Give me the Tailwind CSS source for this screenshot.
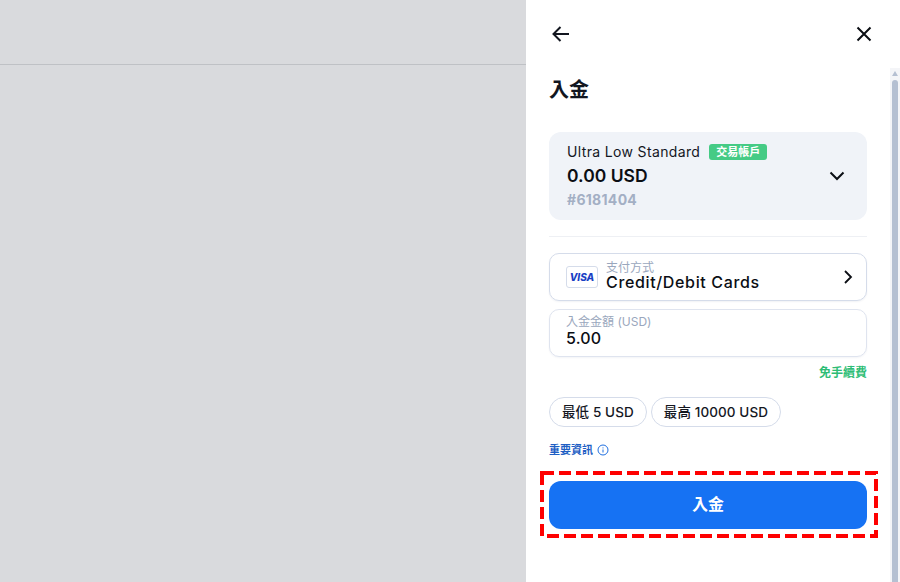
<!DOCTYPE html>
<html lang="zh-Hant">
<head>
<meta charset="UTF-8" />
<meta name="viewport" content="width=device-width, initial-scale=1.0"/>
<title>入金</title>
<script src="https://cdn.jsdelivr.net/npm/@tailwindcss/browser@4"></script>
</head>
<body class="h-[582px] w-[900px] overflow-hidden bg-[#d9dadd] font-['Inter','Noto_Sans_CJK_TC',sans-serif] text-[#0b0e14]">
<div class="flex h-full">
  <!-- backdrop -->
  <div class="flex-1">
    <div class="h-[65px] border-b border-[#bfc1c5]"></div>
  </div>

  <!-- deposit drawer -->
  <div class="flex h-full w-[374px] flex-col bg-white">
    <div class="flex h-[68px] shrink-0 items-center justify-between pl-[25px] pr-[28px]">
      <svg class="h-[20px] w-[20px]" viewBox="0 0 20 20" fill="none" stroke="#12161f" stroke-width="2"><path d="M18 10H3M9.5 3L2.5 10L9.5 17"/></svg>
      <svg class="h-[16px] w-[16px]" viewBox="0 0 16 16" fill="none" stroke="#0b0e14" stroke-width="2"><path d="M1.5 1.5L14.5 14.5M14.5 1.5L1.5 14.5"/></svg>
    </div>

    <div class="flex min-h-0 flex-1">
      <div class="w-[364px] pl-[23px] pr-[23px]">
        <h1 class="mt-[8px] h-[28px] text-[20px] leading-[29px] font-bold text-[#12161f]">入金</h1>

        <!-- account card -->
        <div class="mt-[28px] flex h-[88px] items-center justify-between rounded-[12px] bg-[#f0f3f8] pl-[18px] pr-[22px]">
          <div>
            <div class="flex h-[20px] items-center gap-[9px]">
              <span class="text-[14px] leading-[20px] tracking-[0.35px] text-[#14171f]">Ultra Low Standard</span>
              <span class="flex h-[16px] w-[58px] items-center justify-center rounded-[3px] bg-[#45cb85] text-[11px] font-bold text-white">交易帳戶</span>
            </div>
            <div class="mt-[2px] text-[17.5px] leading-[24px] font-semibold text-[#0b0e14]">0.00 USD</div>
            <div class="mt-[2px] text-[14px] leading-[20px] font-bold tracking-[0.3px] text-[#a3afc4]">#6181404</div>
          </div>
          <svg class="h-[10px] w-[16px]" viewBox="0 0 16 10" fill="none" stroke="#0b0e14" stroke-width="2"><path d="M1.5 1.5L8 8L14.5 1.5"/></svg>
        </div>

        <div class="mt-[16px] h-px bg-[#eef0f4]"></div>

        <!-- payment method -->
        <div class="mt-[16px] flex h-[48px] items-center justify-between rounded-[10px] border border-[#d5dcea] pl-[16px] pr-[13px] shadow-[0_1px_2px_rgba(20,40,90,0.06)]">
          <div class="flex items-center gap-[8px]">
            <div class="flex h-[22px] w-[32px] items-center justify-center rounded-[3px] border border-[#d5dcea]">
              <span class="text-[10px] leading-none font-extrabold text-[#1a3fc4] italic">VISA</span>
            </div>
            <div class="pb-[2px]">
              <div class="text-[12px] leading-[12px] text-[#9aa7bd]">支付方式</div>
              <div class="text-[16px] leading-[16px] font-[450] tracking-[0.65px] text-[#0b0e14]">Credit/Debit Cards</div>
            </div>
          </div>
          <svg class="h-[14px] w-[10px]" viewBox="0 0 10 14" fill="none" stroke="#0b0e14" stroke-width="1.8"><path d="M2 1L8 7L2 13"/></svg>
        </div>

        <!-- amount -->
        <div class="mt-[8px] h-[48px] rounded-[10px] border border-[#dfe4ef] pl-[16px] pt-[5px] shadow-[0_1px_2px_rgba(20,40,90,0.05)]">
          <div class="text-[12px] leading-[14px] text-[#9aa7bd]">入金金額 (USD)</div>
          <div class="text-[16px] leading-[19px] font-medium tracking-[0.2px] text-[#0b0e14]">5.00</div>
        </div>

        <div class="mt-[8px] text-right text-[12px] leading-[16px] font-semibold text-[#2ebd76]">免手續費</div>

        <!-- limits -->
        <div class="mt-[16px] flex gap-[4px]">
          <span class="flex h-[30px] items-center rounded-full border border-[#d5dcea] px-[12px] text-[13.5px] font-[450] tracking-[0.1px] text-[#14171f]">最低 5 USD</span>
          <span class="flex h-[30px] items-center rounded-full border border-[#d5dcea] px-[12px] text-[13.5px] font-[450] tracking-[0.1px] text-[#14171f]">最高 10000 USD</span>
        </div>

        <div class="mt-[15px] flex h-[16px] items-center gap-[4px] text-[11px] font-semibold text-[#1f5fc4]">
          <span>重要資訊</span>
          <svg class="h-[12px] w-[12px]" viewBox="0 0 12 12" fill="none" stroke="#1f6fe0" stroke-width="1"><circle cx="6" cy="6" r="5"/><path d="M6 5.5V8.5M6 3.4V4.4"/></svg>
        </div>

        <!-- submit, with the red annotation frame over it -->
        <div class="relative mt-[23px]">
          <button class="block h-[48px] w-full rounded-[12px] bg-[#1672f3] pb-[2px] text-[16px] font-bold text-white">入金</button>
          <svg class="pointer-events-none absolute top-[-10px] left-[-9px] h-[67px] w-[338px]" viewBox="0 0 338 67" fill="none" stroke="#fe0000" stroke-width="4" stroke-dasharray="12 5"><rect x="2" y="2" width="334" height="63"/></svg>
        </div>
      </div>

      <!-- scrollbar -->
      <div class="relative w-[10px] bg-[#f4f5f8]">
        <div class="absolute top-[3px] left-[2px] h-0 w-0 border-x-[3px] border-b-[5px] border-x-transparent border-b-[#b5c0d2]"></div>
        <div class="absolute top-[12px] right-[2px] bottom-0 w-[6px] rounded-t-[3px] bg-[#b5c0d2]"></div>
      </div>
    </div>
  </div>
</div>
</body>
</html>
